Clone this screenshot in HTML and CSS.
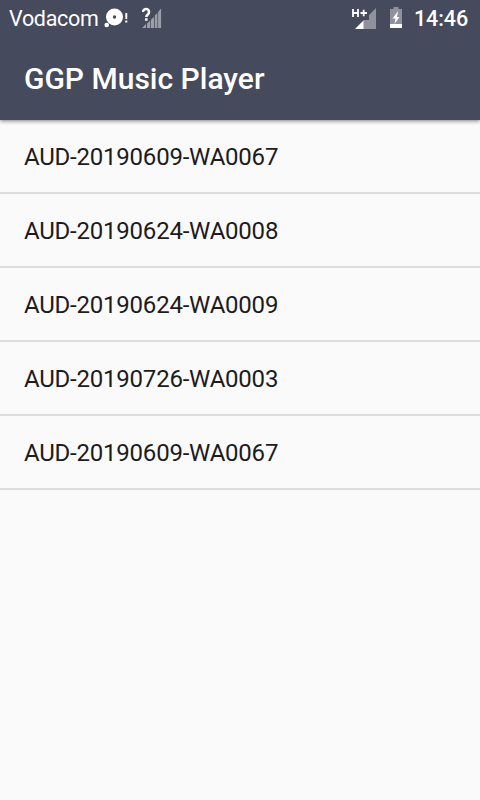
FILE: index.html
```html
<!DOCTYPE html>
<html>
<head>
    <meta charset="utf-8">
    <title>GGP Music Player</title>
    <link rel="stylesheet" href="styles.css">
</head>
<body>
    <header class="header">
        <div class="status-bar">
            <span class="carrier">Vodacom</span>
            <svg class="notify-icon" width="24" height="24" viewBox="0 0 24 24">
                <circle cx="10.500" cy="10" r="8.500" fill="#fff"/>
                <circle cx="10.500" cy="10" r="1.700" fill="#454a5c"/>
                <circle cx="2.700" cy="18" r="2.300" fill="#fff"/>
                <path d="M22.300 6v6M22.300 13.500v2" stroke="#fff" stroke-width="2"/>
            </svg>
            <svg class="unknown-icon" width="20" height="24" viewBox="0 0 20 24">
                <path d="M0 21l4-4V21zM5 21v-4.500l3.300-3V21zM9 21v-8.500l3-2.500v11zM12.800 21V8.500l2.600-2.500V21zM16.100 21V5l3-3.500V21z" fill="#9b9ea8"/>
                <path d="M1 5a3 3 0 1 1 5 2.200Q4.300 8.500 4.300 10M4.300 11.200v2.500" fill="none" stroke="#fff" stroke-width="2.500"/>
            </svg>
            <div class="status-right">
                <svg class="network-icon" width="26" height="24" viewBox="0 0 26 24">
                    <path d="M25 1v21H4l9-9h5V8z" fill="#8f929d"/>
                    <path d="M12.500 13.500v8.500H4z" fill="#fff"/>
                    <path d="M2 2v8M7 2v8M2 6h5M9.500 6h6.500M12.700 2.700v6.600" stroke="#fff" stroke-width="1.800"/>
                </svg>
                <svg class="battery-icon" width="12" height="24" viewBox="0 0 12 24">
                    <path d="M3.500 0h5v2H12v19H0V2h3.500z" fill="#8f929d"/>
                    <path d="M0 17h12v4H0z" fill="#fff"/>
                    <path d="M8 4l-5.500 7.500H5.500L4.500 17l5-7H7z" fill="#fff"/>
                </svg>
                <span class="clock">14:46</span>
            </div>
        </div>
        <h1 class="title">GGP Music Player</h1>
    </header>

    <ul class="song-list">
        <li class="song">AUD-20190609-WA0067</li>
        <li class="song">AUD-20190624-WA0008</li>
        <li class="song">AUD-20190624-WA0009</li>
        <li class="song">AUD-20190726-WA0003</li>
        <li class="song">AUD-20190609-WA0067</li>
    </ul>
</body>
</html>
```
FILE: styles.css
```css
* {
    margin: 0;
    padding: 0;
    box-sizing: border-box;
}
body {
    font-family: Roboto, sans-serif;
    background-color: #fafafa;
    color: #1c1c1c;
    min-height: 100vh;
}
/* Status bar and title */
.header {
    height: 120px;
    background-color: #454a5c;
    color: #fff;
    box-shadow: 0 1px 4px rgba(0, 0, 0, 0.5);
}
.status-bar {
    display: flex;
    align-items: center;
    height: 38px;
    padding: 0 12px 0 9px;
    font-size: 21.5px;
    letter-spacing: -0.3px;
}
.carrier {
    width: 89px;
    padding-bottom: 2px;
}
.notify-icon {
    margin-left: 6px;
}
.unknown-icon {
    margin-left: 14px;
}
.status-right {
    display: flex;
    align-items: center;
    margin-left: auto;
}
.battery-icon {
    margin: 0 12px 0 13px;
}
.clock {
    width: 54px;
    padding-bottom: 2px;
    font-weight: 500;
    letter-spacing: -0.1px;
    text-align: right;
}
.title {
    padding-left: 24px;
    font-size: 30px;
    font-weight: 500;
    line-height: 82px;
}
/* Song list */
.song-list {
    list-style: none;
}
.song {
    height: 74px;
    padding-left: 24px;
    border-bottom: 2px solid #dcdcdc;
    font-size: 24px;
    letter-spacing: -0.22px;
    line-height: 74px;
}
```
